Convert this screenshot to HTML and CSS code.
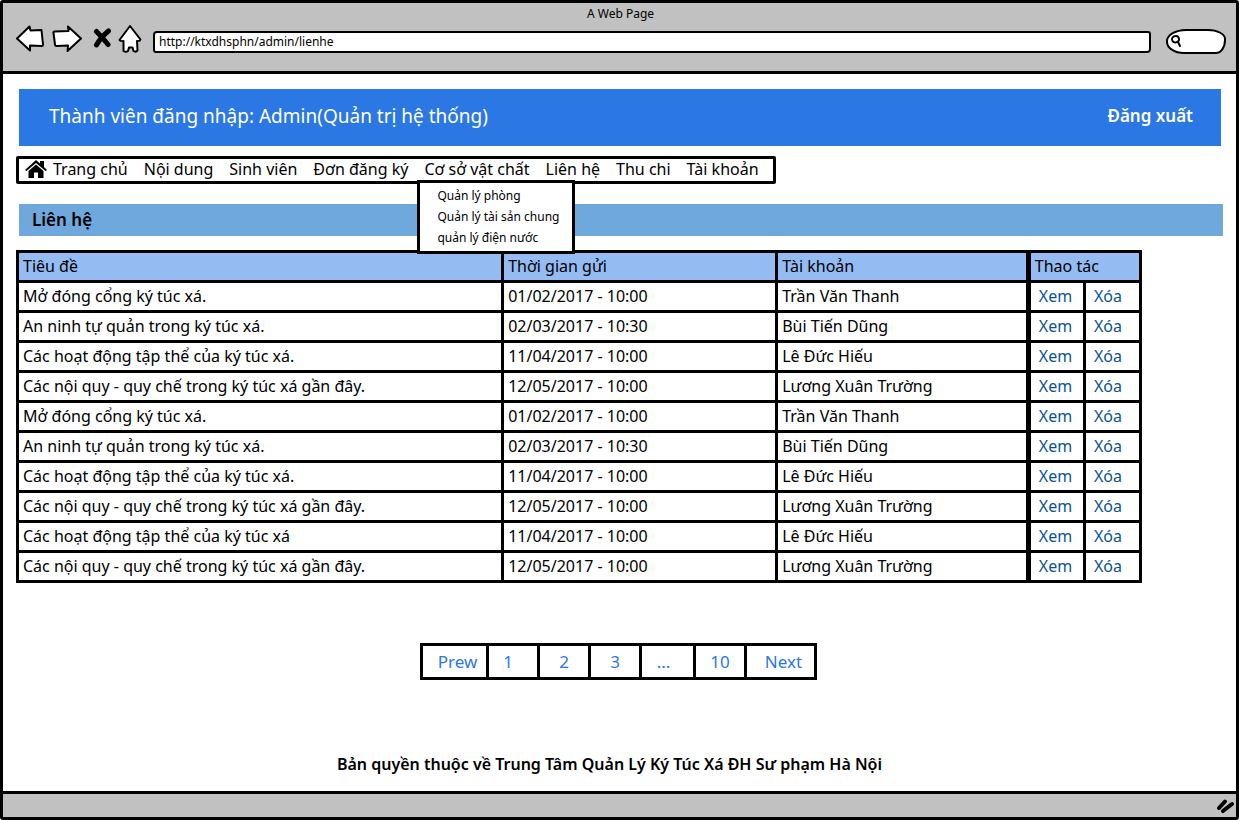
FILE: index.html
```html
<!DOCTYPE html>
<html lang="vi">
<head>
<meta charset="utf-8">
<meta name="viewport" content="width=device-width, initial-scale=1">
<title>A Web Page</title>
<link rel="stylesheet" href="styles.css">
</head>
<body>
<div class="window">
  <header class="chrome">
    <div class="chrome-title">A Web Page</div>
    <div class="toolbar">
      <div class="tools">
        <button type="button" class="tool" aria-label="Back"><svg width="30" height="30" viewBox="0 0 30 30"><path class="hollow" d="M2 14.500L14.500 2.500L15.500 6.500L26.500 6L28 20.500Q28 22 26.500 22L15 21.500L15 26.500Z"/></svg></button>
        <button type="button" class="tool" aria-label="Forward"><svg width="30" height="30" viewBox="0 0 30 30"><path class="hollow" d="M29 14.500L16 2.500L16.500 7L2.500 7.500Q1 8 1.500 9L3 20.500Q3 22 5 22L16 21.500L15.500 27Z"/></svg></button>
        <button type="button" class="tool stop" aria-label="Stop"><svg width="18" height="22" viewBox="0 0 18 22"><path class="cross" d="M3.500 3.500Q8 8 15 16.500M15.500 3Q8 9 3.500 17"/></svg></button>
        <button type="button" class="tool" aria-label="Home"><svg width="24" height="30" viewBox="0 0 24 30"><path class="hollow" d="M12 2L22.500 15.500Q22 17.500 19 17L19.500 26.500Q18 28.500 15.500 27L14.500 23.500L11 23.500L10 27Q8 28.500 5.500 27L5.500 17Q2 17.500 1.500 16Z"/></svg></button>
      </div>
      <input class="address" type="text" aria-label="Address" value="http://ktxdhsphn/admin/lienhe">
      <div class="search">
        <svg width="12" height="14" viewBox="0 0 12 14"><path d="M6 2C2.500 2 1 5 2.500 7C4 9.500 8.500 8.500 9 6C9.200 3.500 8 2 6 2M8 8L10 12"/></svg>
        <input type="search" aria-label="Search">
      </div>
    </div>
  </header>

  <main class="page">
    <div class="banner">
      <span>Thành viên đăng nhập: Admin(Quản trị hệ thống)</span>
      <a class="logout" href="#">Đăng xuất</a>
    </div>

    <nav class="menu" aria-label="Menu">
      <a class="home" href="#"><svg width="22" height="18" viewBox="0 0 22 18"><path d="M11 0L15 3.500V1H19V7L22 10L20.500 11L11 3L1.500 11L0 10Z"/><path d="M11 4.500L18.500 11V18H13V12.500H9V18H3.500V11Z"/></svg>Trang chủ</a>
      <a href="#">Nội dung</a>
      <a href="#">Sinh viên</a>
      <a href="#">Đơn đăng ký</a>
      <div class="has-sub">
        <a href="#">Cơ sở vật chất</a>
        <div class="submenu">
          <a href="#">Quản lý phòng</a>
          <a href="#">Quản lý tài sản chung</a>
          <a href="#">quản lý điện nước</a>
        </div>
      </div>
      <a href="#">Liên hệ</a>
      <a href="#">Thu chi</a>
      <a href="#">Tài khoản</a>
    </nav>

    <h1 class="heading">Liên hệ</h1>

    <table class="contacts">
      <colgroup><col class="c-title"><col class="c-time"><col class="c-user"><col class="c-act"><col class="c-act"></colgroup>
      <thead>
        <tr><th scope="col">Tiêu đề</th><th scope="col">Thời gian gửi</th><th scope="col">Tài khoản</th><th scope="colgroup" colspan="2">Thao tác</th></tr>
      </thead>
      <tbody>
        <tr><td>Mở đóng cổng ký túc xá.</td><td>01/02/2017 - 10:00</td><td>Trần Văn Thanh</td><td><a href="#">Xem</a></td><td><a href="#">Xóa</a></td></tr>
        <tr><td>An ninh tự quản trong ký túc xá.</td><td>02/03/2017 - 10:30</td><td>Bùi Tiến Dũng</td><td><a href="#">Xem</a></td><td><a href="#">Xóa</a></td></tr>
        <tr><td>Các hoạt động tập thể của ký túc xá.</td><td>11/04/2017 - 10:00</td><td>Lê Đức Hiếu</td><td><a href="#">Xem</a></td><td><a href="#">Xóa</a></td></tr>
        <tr><td>Các nội quy - quy chế trong ký túc xá gần đây.</td><td>12/05/2017 - 10:00</td><td>Lương Xuân Trường</td><td><a href="#">Xem</a></td><td><a href="#">Xóa</a></td></tr>
        <tr><td>Mở đóng cổng ký túc xá.</td><td>01/02/2017 - 10:00</td><td>Trần Văn Thanh</td><td><a href="#">Xem</a></td><td><a href="#">Xóa</a></td></tr>
        <tr><td>An ninh tự quản trong ký túc xá.</td><td>02/03/2017 - 10:30</td><td>Bùi Tiến Dũng</td><td><a href="#">Xem</a></td><td><a href="#">Xóa</a></td></tr>
        <tr><td>Các hoạt động tập thể của ký túc xá.</td><td>11/04/2017 - 10:00</td><td>Lê Đức Hiếu</td><td><a href="#">Xem</a></td><td><a href="#">Xóa</a></td></tr>
        <tr><td>Các nội quy - quy chế trong ký túc xá gần đây.</td><td>12/05/2017 - 10:00</td><td>Lương Xuân Trường</td><td><a href="#">Xem</a></td><td><a href="#">Xóa</a></td></tr>
        <tr><td>Các hoạt động tập thể của ký túc xá</td><td>11/04/2017 - 10:00</td><td>Lê Đức Hiếu</td><td><a href="#">Xem</a></td><td><a href="#">Xóa</a></td></tr>
        <tr><td>Các nội quy - quy chế trong ký túc xá gần đây.</td><td>12/05/2017 - 10:00</td><td>Lương Xuân Trường</td><td><a href="#">Xem</a></td><td><a href="#">Xóa</a></td></tr>
      </tbody>
    </table>

    <nav class="pager" aria-label="Pages">
      <a class="prev" href="#">Prew</a>
      <a class="first" href="#">1</a>
      <a href="#">2</a>
      <a href="#">3</a>
      <a class="skip" href="#">...</a>
      <a href="#">10</a>
      <a class="next" href="#">Next</a>
    </nav>

    <footer class="copyright">Bản quyền thuộc về Trung Tâm Quản Lý Ký Túc Xá ĐH Sư phạm Hà Nội</footer>
  </main>

  <div class="statusbar">
    <svg width="20" height="16" viewBox="0 0 20 16"><path d="M3 10L9 3.500M7 13L16 6"/></svg>
  </div>
</div>
</body>
</html>
```

FILE: styles.css
```css
* { box-sizing: border-box; }

body {
  margin: 0;
  background: #fff;
  color: #000;
  font-family: "Noto Sans", "Open Sans", sans-serif;
  font-size: 16px;
  line-height: 20px;
}

a { color: inherit; text-decoration: none; }

.window {
  display: flex;
  flex-direction: column;
  min-height: 100vh;
  border: 3px solid #000;
  border-radius: 3px;
}

/* Browser chrome */
.chrome {
  padding: 2px 10px 16px 12px;
  background: #c1c1c1;
  border-bottom: 3px solid #000;
}
.chrome-title { font-size: 12px; line-height: 18px; text-align: center; }
.toolbar { display: flex; align-items: center; gap: 11px; height: 32px; }
.tools { display: flex; align-items: center; gap: 7px; }
.tool { display: flex; padding: 0; border: 0; background: none; }
.stop { margin-left: 4px; }
.hollow { fill: #fff; stroke: #000; stroke-width: 2; stroke-linejoin: round; }
.cross { fill: none; stroke: #000; stroke-width: 5; stroke-linecap: round; }
.address {
  flex: 1;
  min-width: 0;
  height: 22px;
  margin-top: 6px;
  padding: 0 4px 2px;
  border: 2px solid #000;
  border-radius: 4px 3px 4px 3px;
  background: #fff;
  font: 12px/16px "Noto Sans", sans-serif;
}
.search {
  display: flex;
  align-items: center;
  width: 60px;
  height: 25px;
  margin: 4px 0 0 4px;
  padding-left: 2px;
  border: 2px solid #000;
  border-radius: 20px 18px 10px 18px / 12px 10px 14px 12px;
  background: #fff;
}
.search svg { flex: none; fill: none; stroke: #000; stroke-width: 2; stroke-linecap: round; }
.search input { flex: 1; min-width: 0; padding: 0; border: 0; outline: 0; background: none; }

/* Page content */
.page { flex: 1; padding: 15px 13px 0; }

.banner {
  display: flex;
  align-items: center;
  justify-content: space-between;
  height: 57px;
  margin: 0 2px 10px 3px;
  padding: 0 28px 4px 30px;
  background: #2b78e4;
  color: #fff;
  font-size: 19px;
}
.logout { font-size: 17px; font-weight: 600; }

.menu {
  display: flex;
  align-items: center;
  gap: 16px;
  width: fit-content;
  height: 28px;
  padding: 0 14px 2px 6px;
  border: 3px solid #000;
  border-radius: 2px;
}
.home { display: flex; align-items: center; gap: 6px; }
.has-sub { position: relative; }
.submenu {
  position: absolute;
  top: 21px;
  left: -7px;
  display: flex;
  flex-direction: column;
  width: 158px;
  padding: 2px 0 3px 17px;
  border: 3px solid #000;
  background: #fff;
  font-size: 12px;
  line-height: 21px;
}

.heading {
  margin: 20px 0 14px 3px;
  padding: 0 13px;
  background: #6fa8dc;
  font-size: 17px;
  font-weight: 600;
  line-height: 32px;
}

.contacts {
  width: 93.3%;
  border-collapse: collapse;
  table-layout: fixed;
}
.c-title { width: 43.2%; }
.c-time { width: 24.4%; }
.c-user { width: 22.4%; }
.c-act { width: 5%; }
.contacts th,
.contacts td {
  height: 30px;
  padding: 0 4px 2px;
  border: 3px solid #000;
  font-weight: 400;
  text-align: left;
}
.contacts th { background: #94bbf2; }
.contacts th:nth-child(4),
.contacts td:nth-child(4) { border-left-width: 5px; }
.contacts a { padding-left: 4px; color: #0b5394; }

.pager {
  display: flex;
  width: fit-content;
  margin: 60px auto 74px 404px;
  border: 3px solid #000;
  color: #2b78e4;
  font-size: 17px;
  line-height: 31px;
  text-align: center;
}
.pager a { width: 51px; }
.pager a + a { border-left: 3px solid #000; }
.pager .prev { width: 63px; padding-left: 6px; }
.pager .first { padding-right: 10px; }
.pager .skip { width: 54px; padding-right: 8px; }
.pager .next { width: 70px; padding-left: 6px; }

.copyright { padding-right: 20px; font-weight: 600; text-align: center; }

.statusbar {
  display: flex;
  align-items: center;
  justify-content: flex-end;
  height: 26px;
  border-top: 3px solid #000;
  background: #c1c1c1;
}
.statusbar svg { fill: none; stroke: #000; stroke-width: 4; stroke-linecap: round; }
```
